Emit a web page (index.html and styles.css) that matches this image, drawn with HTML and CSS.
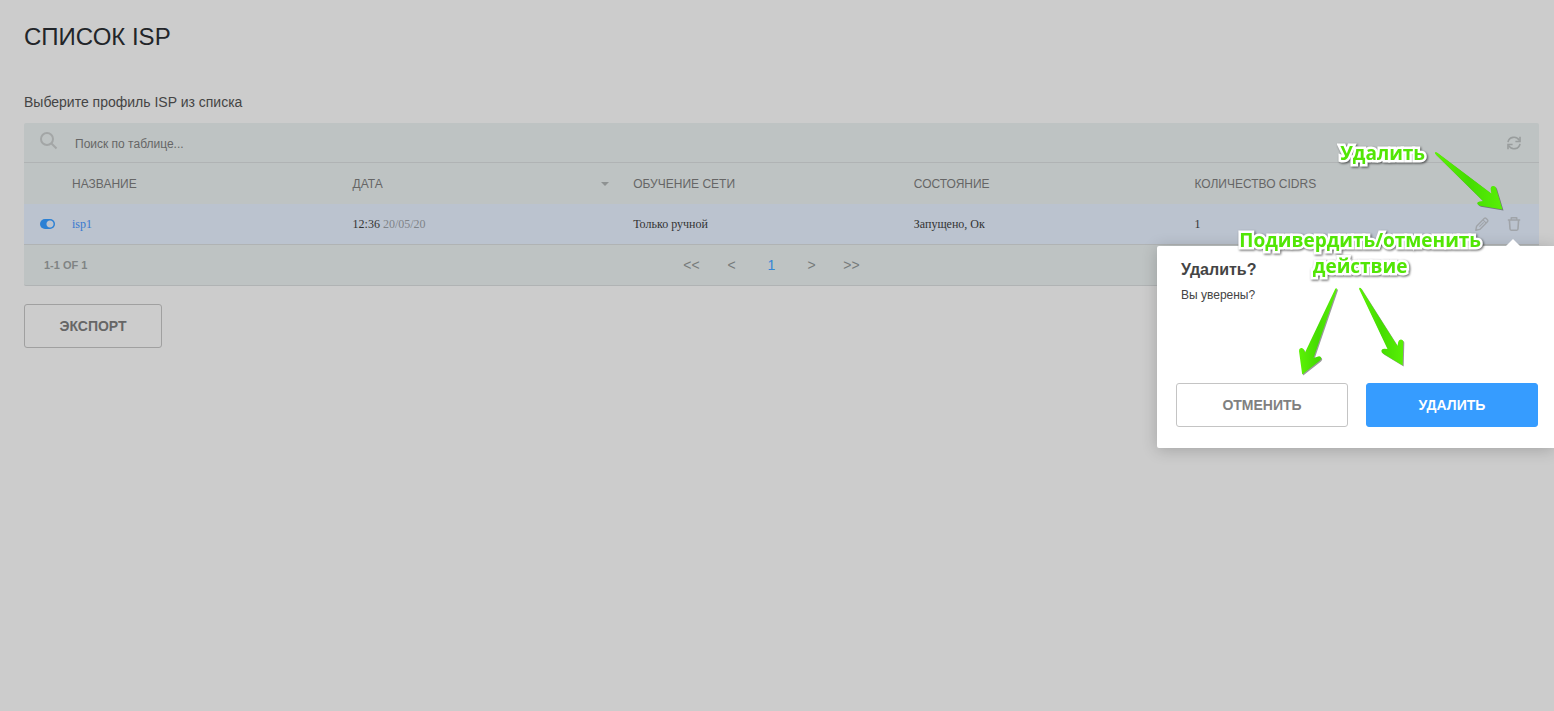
FILE: index.html
```html
<!DOCTYPE html>
<html lang="ru">
<head>
  <meta charset="UTF-8">
  <meta name="viewport" content="width=device-width, initial-scale=1.0">
  <title>Список ISP</title>
  <link rel="stylesheet" href="styles.css">
</head>
<body>
  <main class="page">
    <h1>Список ISP</h1>
    <p class="lead">Выберите профиль ISP из списка</p>

    <section class="grid">
      <!-- Search -->
      <form class="search">
        <label for="search" aria-label="Поиск">
          <svg width="18" height="18" viewBox="0 0 18 18" fill="none" stroke="#a3a6a6" stroke-width="2">
            <circle cx="7" cy="7" r="6"/>
            <path d="M11.500 11.500l5 5"/>
          </svg>
        </label>
        <input type="text" id="search" placeholder="Поиск по таблице...">
        <button type="button" class="icon-btn" aria-label="Обновить">
          <svg width="16" height="16" viewBox="0 0 16 16" fill="none" stroke="#999d9d" stroke-width="1.6">
            <path d="M2 7.200A6 5.800 0 0 1 13.300 5.500"/>
            <path d="M14 1.800v4.700H9.400"/>
            <path d="M14 8.800A6 5.800 0 0 1 2.700 10.500"/>
            <path d="M2 14.200V9.500h4.600"/>
          </svg>
        </button>
      </form>

      <table>
        <colgroup>
          <col class="col-toggle"><col><col><col><col><col><col class="col-actions">
        </colgroup>
        <thead>
          <tr>
            <th></th>
            <th>Название</th>
            <th><div class="sorted">Дата <i class="caret"></i></div></th>
            <th>Обучение сети</th>
            <th>Состояние</th>
            <th>Количество CIDRs</th>
            <th></th>
          </tr>
        </thead>
        <tbody>
          <tr>
            <td class="toggle-cell"><input type="checkbox" class="toggle" aria-label="Включить isp1" checked></td>
            <td><a href="#">isp1</a></td>
            <td>12:36 <span class="muted">20/05/20</span></td>
            <td>Только ручной</td>
            <td>Запущено, Ок</td>
            <td>1</td>
            <td class="actions-cell">
              <div class="actions">
                <button type="button" class="icon-btn" aria-label="Изменить">
                  <svg width="14" height="14" viewBox="0 0 14 14" fill="none" stroke="#a0a4a9" stroke-width="1.4" stroke-linejoin="round">
                    <path d="M.8 13.200l.8-4 7.600-7.600q1-1 2 0l1.200 1.200q1 1 0 2l-7.600 7.600z"/>
                    <path d="M8 2.900L11.100 6M4.400 9.600l4.300-4.300" stroke-width="1.100"/>
                  </svg>
                </button>
                <button type="button" class="icon-btn" aria-label="Удалить isp1">
                  <svg width="14" height="14" viewBox="0 0 14 14" fill="none" stroke="#a0a4a9" stroke-width="1.600" stroke-linejoin="round">
                    <path d="M.8 3h12.400M4.300 3V.8h5.400V3M2.400 3l.6 8.800q.1 1.400 1.200 1.400h5.600q1.100 0 1.200-1.400l.6-8.800"/>
                  </svg>
                </button>
              </div>
              <!-- Confirm popup, hangs under the trash button -->
              <div class="popup" role="dialog" aria-labelledby="popup-title">
                <h2 id="popup-title">Удалить?</h2>
                <p>Вы уверены?</p>
                <div class="popup-buttons">
                  <button type="button" class="btn">Отменить</button>
                  <button type="button" class="btn btn-primary">Удалить</button>
                </div>
              </div>
            </td>
          </tr>
        </tbody>
      </table>

      <footer class="pager">
        <span class="range">1-1 of 1</span>
        <nav class="pages">
          <a href="#">&lt;&lt;</a>
          <a href="#">&lt;</a>
          <a href="#" class="current">1</a>
          <a href="#">&gt;</a>
          <a href="#">&gt;&gt;</a>
        </nav>
      </footer>
    </section>

    <button type="button" class="btn export">Экспорт</button>
  </main>

  <!-- Hints over the page -->
  <div class="hints">
    <svg class="arrows" width="330" height="390" viewBox="0 0 330 390">
      <defs>
        <linearGradient id="green" x1="0" x2="1" y1="0" y2="0">
          <stop offset="0" stop-color="#5cf205"/>
          <stop offset=".5" stop-color="#45dc02"/>
          <stop offset="1" stop-color="#58f005"/>
        </linearGradient>
      </defs>
      <g fill="url(#green)">
        <path d="M211.300 152.300q-.8.6 0 1.700L259 201l-3.500.4q-2.500.4-2.300 2.200.2 1.600 2.800 2.200L278.500 209.500 272 188q-.8-2.500-3.300-2-2.300.5-2 3l.6 4.500L213 152.400q-1-.6-1.700-.1z"/>
        <path d="M112.700 288.300q-.9-.5-1.400.5L81 352.500l-1-2.500q-1.200-2.500-3-2-2.200.6-2 3L78.200 374.500 96 360.500q2-1.600.9-3.200-1.200-1.700-3.500-.6L89.500 358 112.900 289.500z"/>
        <path d="M135.500 287.700q-.7.600-.3 1.500L163.500 349l-3.200-.2q-2.500-.1-2.900 1.700-.4 1.800 1.900 3.200L178.700 365.500l.6-23.500q0-2.500-2.500-2.500-2 0-2.600 2.500L173.500 346 136.800 288z"/>
      </g>
    </svg>
    <p class="hint hint-delete">Удалить</p>
    <p class="hint hint-confirm">Подивердить/отменить<br>действие</p>
  </div>
</body>
</html>
```
FILE: styles.css
```css
* {
  box-sizing: border-box;
  margin: 0;
  padding: 0;
}
body {
  position: relative;
  min-height: 100vh;
  overflow-x: hidden;
  background: #ccc;
  color: #444;
  font-family: "Liberation Sans", Arial, sans-serif;
  font-size: 12px;
}
button {
  font-family: inherit;
  cursor: pointer;
}
a {
  text-decoration: none;
}
.page {
  padding: 20px 15px 20px 24px;
}
h1 {
  color: #222529;
  font-size: 24px;
  font-weight: 400;
  line-height: 34px;
  text-transform: uppercase;
}
.lead {
  margin-top: 38px;
  font-size: 14px;
  line-height: 20px;
}

/* Table */
.grid {
  margin-top: 11px;
  background: #bec3c3;
  border-bottom: 1px solid #b0b3b4;
  border-radius: 2px;
}
.search {
  display: flex;
  align-items: center;
  height: 40px;
  padding: 0 17px 0 16px;
  border-bottom: 1px solid #b0b3b4;
}
.search label,
.icon-btn svg {
  display: block;
}
.search input {
  flex: 1;
  height: 38px;
  margin-left: 17px;
  padding-top: 2px;
  border: 0;
  background: none;
  color: #666;
  font: 12px "Liberation Sans", Arial, sans-serif;
  outline: none;
}
.search input::placeholder {
  color: #666;
}
.icon-btn {
  border: 0;
  background: none;
}
table {
  width: 100%;
  table-layout: fixed;
  border-collapse: separate;
  border-spacing: 0;
}
.col-toggle {
  width: 48px;
}
.col-actions {
  width: 64px;
}
th {
  height: 41px;
  color: #666;
  font-weight: 400;
  text-align: left;
  text-transform: uppercase;
}
.sorted {
  display: flex;
  align-items: center;
  justify-content: space-between;
  padding-right: 24px;
}
.caret {
  border: 4px solid transparent;
  border-top-color: #8e9292;
  border-bottom: 0;
}
td {
  height: 41px;
  background: #bbc3cf;
  border-bottom: 1px solid #b0b3b4;
  color: #333;
  font-family: "Liberation Serif", "Times New Roman", serif;
}
td a {
  color: #3878cf;
}
.muted {
  color: #808489;
}
.toggle-cell {
  padding-left: 16px;
}
.toggle {
  display: block;
  width: 15px;
  height: 10px;
  appearance: none;
  border-radius: 5px;
  background: radial-gradient(circle at 10px 5px, #bbc3cf 3px, #2b80d4 4px);
}
.actions-cell {
  position: relative;
}
.actions {
  display: flex;
  gap: 18px;
}

/* Popup */
.popup {
  position: absolute;
  top: 42px;
  right: -15px;
  z-index: 1;
  width: 397px;
  padding: 14px 16px 21px 19px;
  border-radius: 2px 0 0 2px;
  background: #fff;
  box-shadow: 0 2px 16px rgba(0, 0, 0, .2);
  color: #444;
  font-family: "Liberation Sans", Arial, sans-serif;
}
.popup::before {
  content: "";
  position: absolute;
  top: -7px;
  right: 34px;
  border: 7px solid transparent;
  border-top: 0;
  border-bottom-color: #fff;
}
.popup h2 {
  padding-left: 5px;
  font-size: 16px;
  line-height: 20px;
}
.popup p {
  padding-left: 5px;
  margin-top: 7px;
  line-height: 16px;
}
.popup-buttons {
  display: flex;
  gap: 18px;
  margin-top: 80px;
}
.popup-buttons .btn {
  flex: 1;
}
.btn {
  height: 44px;
  border: 1px solid #c4c4c4;
  border-radius: 3px;
  background: none;
  color: #808080;
  font-size: 14px;
  font-weight: 700;
  text-transform: uppercase;
}
.btn-primary {
  border-color: #369cff;
  background: #369cff;
  color: #fff;
}
.export {
  width: 138px;
  margin-top: 18px;
  border-color: #a0a0a0;
  color: #666;
}

/* Pager */
.pager {
  display: grid;
  grid-template-columns: 1fr auto 1fr;
  align-items: center;
  height: 40px;
  padding: 0 40px 0 20px;
}
.range {
  color: #808484;
  font-size: 11px;
  font-weight: 700;
  text-transform: uppercase;
}
.pages {
  display: flex;
}
.pages a {
  width: 40px;
  color: #777b7b;
  font-size: 14px;
  text-align: center;
}
.pages .current {
  color: #3586d6;
}

/* Hints */
.hints {
  position: absolute;
  top: 0;
  right: 0;
  z-index: 2;
  width: 330px;
  pointer-events: none;
}
.arrows {
  display: block;
  filter: drop-shadow(1px 1px 0 rgba(0, 0, 0, .4));
}
.hint {
  position: absolute;
  color: #52e605;
  font: 700 19px/26px "Open Sans", "Noto Sans", sans-serif;
  text-align: center;
  white-space: nowrap;
  -webkit-text-stroke: 5px #fff;
  paint-order: stroke fill;
  filter: drop-shadow(1px 1px 1px rgba(0, 0, 0, .6));
}
.hint-delete {
  top: 140px;
  right: 129px;
}
.hint-confirm {
  top: 227px;
  right: 73px;
}
```
